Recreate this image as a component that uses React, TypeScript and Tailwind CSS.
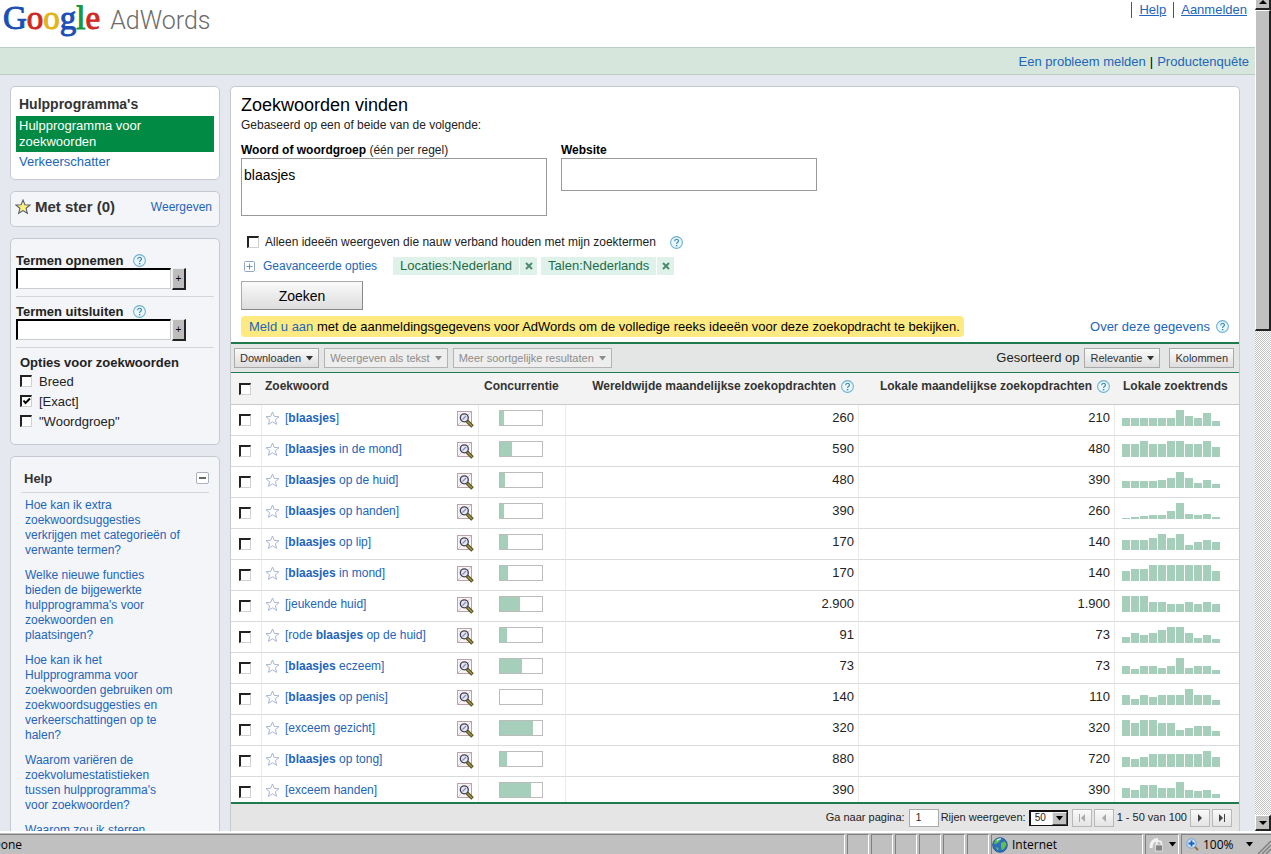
import React from "react";

type Part = { text: string; bold?: boolean };
type Row = { parts: Part[]; fill: number; world: string; local: string; trend: number[] };

const b = (text: string): Part => ({ text, bold: true });
const t = (text: string): Part => ({ text });

const ROWS: Row[] = [
  { parts: [t("["), b("blaasjes"), t("]")], fill: 4, world: "260", local: "210", trend: [8, 8, 8, 8, 8, 8, 16, 10, 8, 13, 5] },
  { parts: [t("["), b("blaasjes"), t(" in de mond]")], fill: 12, world: "590", local: "480", trend: [13, 13, 16, 13, 13, 16, 16, 13, 13, 16, 10] },
  { parts: [t("["), b("blaasjes"), t(" op de huid]")], fill: 5, world: "480", local: "390", trend: [7, 7, 7, 7, 8, 10, 16, 10, 5, 8, 4] },
  { parts: [t("["), b("blaasjes"), t(" op handen]")], fill: 4, world: "390", local: "260", trend: [1, 2, 3, 4, 4, 8, 16, 5, 4, 5, 2] },
  { parts: [t("["), b("blaasjes"), t(" op lip]")], fill: 8, world: "170", local: "140", trend: [10, 10, 10, 12, 16, 12, 16, 5, 8, 10, 8] },
  { parts: [t("["), b("blaasjes"), t(" in mond]")], fill: 8, world: "170", local: "140", trend: [10, 12, 12, 16, 16, 16, 16, 16, 16, 16, 10] },
  { parts: [t("[jeukende huid]")], fill: 20, world: "2.900", local: "1.900", trend: [16, 16, 16, 10, 10, 8, 8, 10, 8, 10, 8] },
  { parts: [t("[rode "), b("blaasjes"), t(" op de huid]")], fill: 7, world: "91", local: "73", trend: [6, 10, 8, 10, 13, 16, 16, 10, 5, 8, 4] },
  { parts: [t("["), b("blaasjes"), t(" eczeem]")], fill: 22, world: "73", local: "73", trend: [8, 5, 8, 8, 6, 8, 16, 6, 8, 8, 4] },
  { parts: [t("["), b("blaasjes"), t(" op penis]")], fill: 0, world: "140", local: "110", trend: [10, 6, 10, 8, 10, 10, 10, 16, 10, 10, 5] },
  { parts: [t("[exceem gezicht]")], fill: 33, world: "320", local: "320", trend: [16, 13, 16, 16, 13, 13, 6, 8, 10, 10, 5] },
  { parts: [t("["), b("blaasjes"), t(" op tong]")], fill: 7, world: "880", local: "720", trend: [10, 8, 10, 13, 13, 13, 13, 13, 13, 16, 10] },
  { parts: [t("[exceem handen]")], fill: 31, world: "390", local: "390", trend: [10, 8, 13, 13, 10, 10, 16, 8, 7, 8, 4] },
];

const HELP_LINKS = [
  "Hoe kan ik extra zoekwoordsuggesties verkrijgen met categorieën of verwante termen?",
  "Welke nieuwe functies bieden de bijgewerkte hulpprogramma's voor zoekwoorden en plaatsingen?",
  "Hoe kan ik het Hulpprogramma voor zoekwoorden gebruiken om zoekwoordsuggesties en verkeerschattingen op te halen?",
  "Waarom variëren de zoekvolumestatistieken tussen hulpprogramma's voor zoekwoorden?",
  "Waarom zou ik sterren",
];

const STAR = "M7.5 1l1.8 4.4 4.7.3-3.6 3 1.2 4.7-4.1-2.6-4.1 2.6 1.2-4.7-3.6-3 4.7-.3z";

function Check({ id, label, checked }: { id?: string; label?: string; checked?: boolean }) {
  return (
    <span className="relative block h-3 w-3 shrink-0">
      <input
        id={id}
        type="checkbox"
        aria-label={label}
        defaultChecked={checked}
        className="peer block h-3 w-3 appearance-none border-t-2 border-r border-b border-l-2 border-t-[#222] border-r-[#d0d0d0] border-b-[#d0d0d0] border-l-[#222] bg-white"
      />
      <svg viewBox="0 0 12 12" className="pointer-events-none absolute inset-0 hidden h-3 w-3 peer-checked:block">
        <path d="M3.5 5.5l2 2.5L10 3.500" fill="none" stroke="#000" strokeWidth="2" />
      </svg>
    </span>
  );
}

function HelpIcon() {
  return (
    <a href="#uitleg" aria-label="Uitleg" className="block h-[13px] w-[13px] shrink-0">
      <svg viewBox="0 0 13 13" className="block h-[13px] w-[13px]">
        <circle cx="6.500" cy="6.500" r="5.900" fill="#e9f6fb" stroke="#6fb0cf" strokeWidth="1.100" />
        <path d="M4.700 5.200c0-2.600 3.700-2.500 3.700-.3 0 1.400-1.800 1.500-1.800 3" fill="none" stroke="#3486ad" strokeWidth="1.200" />
        <rect x="5.900" y="9" width="1.400" height="1.300" fill="#3486ad" />
      </svg>
    </a>
  );
}

function Caret() {
  return (
    <svg viewBox="0 0 7 5" className="h-[5px] w-[7px]">
      <path d="M0 0h7L3.500 4.500z" fill="currentColor" />
    </svg>
  );
}

function ToolButton({ children, muted, caret }: { children: React.ReactNode; muted?: boolean; caret?: boolean }) {
  return (
    <button
      type="button"
      disabled={muted}
      className={
        muted
          ? "flex h-5 items-center gap-[5px] border border-[#b4b4b4] bg-[#eeeeee] px-[5px] text-[11px] whitespace-nowrap text-[#8c8c8c]"
          : "flex h-5 items-center gap-[5px] border border-[#aaa] bg-linear-to-b from-[#fafafa] to-[#dedede] px-[5px] text-[11px] whitespace-nowrap text-[#333]"
      }
    >
      {children}
      {caret && <Caret />}
    </button>
  );
}

function PageButton({ label, path, muted }: { label: string; path: string; muted?: boolean }) {
  return (
    <button
      type="button"
      aria-label={label}
      disabled={muted}
      className="flex h-[18px] w-5 items-center justify-center border border-[#b8b8b8] bg-linear-to-b from-[#fafafa] to-[#e4e4e4] text-[#444] disabled:text-[#aaa]"
    >
      <svg viewBox="0 0 10 8" className="h-2 w-2.5">
        <path d={path} fill="currentColor" />
      </svg>
    </button>
  );
}

function Chip({ children }: { children: string }) {
  return (
    <span className="flex h-[18px] items-center text-[13px] text-[#1f6b45]">
      <span className="flex h-full items-center bg-[#def2ea] px-[7px]">{children}</span>
      <button type="button" aria-label={"Verwijder " + children} className="ml-px flex h-full w-[17px] items-center justify-center bg-[#def2ea]">
        <svg viewBox="0 0 8 8" className="h-2 w-2">
          <path d="M1 1l6 6M7 1L1 7" stroke="#4d8a6c" strokeWidth="2" />
        </svg>
      </button>
    </span>
  );
}

function TermField({ id, label }: { id: string; label: string }) {
  return (
    <div className="border-b border-[#d5d7dd] pt-1.5 pb-1.5">
      <div className="flex h-4 items-center gap-2.5">
        <label htmlFor={id} className="pt-px text-[13px] leading-4 font-bold text-[#222]">{label}</label>
        <HelpIcon />
      </div>
      <div className="flex h-[22px] gap-px">
        <input id={id} type="text" className="h-[21px] w-[155px] border-t-2 border-r border-b border-l-2 border-t-black border-r-[#ccc] border-b-[#ccc] border-l-black bg-white px-1 text-xs outline-none" />
        <button type="button" aria-label={label + " toevoegen"} className="flex h-[22px] w-3.5 items-center justify-center border-t border-r-2 border-b-2 border-l border-t-[#eee] border-r-[#222] border-b-[#222] border-l-[#eee] bg-[#bdbdbd] text-[10px]">
          +
        </button>
      </div>
    </div>
  );
}

function MagnifierIcon() {
  return (
    <svg viewBox="0 0 17 17" className="block h-[17px] w-[17px]">
      <rect x=".5" y=".5" width="14" height="14" fill="#f8f4f5" stroke="#b9a4ac" />
      <path d="M1 14L14 1M2 3l11 11" stroke="#d9c9d0" strokeWidth="1" />
      <path d="M10 10l5.500 5.500" stroke="#4f4a1e" strokeWidth="3.600" />
      <path d="M10.500 10.500l4.500 4.500" stroke="#a89a45" strokeWidth="1.400" />
      <circle cx="7.300" cy="6.800" r="4" fill="#e3e6f5" stroke="#433f50" strokeWidth="1.300" />
      <path d="M5.500 8.500L9 5" stroke="#8b8fb8" strokeWidth="1.300" />
    </svg>
  );
}

function Sidebar() {
  const card = "rounded-[5px] border border-[#c6c9d2]";
  return (
    <aside className="flex w-[210px] shrink-0 flex-col gap-[11px]">
      <nav className={card + " h-[94px] shrink-0 bg-white px-[5px] pt-2"}>
        <h2 className="h-[21px] px-[3px] text-[14px] leading-[18px] font-bold text-[#333]">Hulpprogramma's</h2>
        <a href="#zoekwoorden" className="block h-9 bg-[#018a43] px-[3px] py-0.5 text-[13px] leading-4 text-white">
          Hulpprogramma voor<br />zoekwoorden
        </a>
        <a href="#verkeer" className="block px-[3px] pt-0.5 text-[13px] leading-4 text-[#2265ba]">Verkeerschatter</a>
      </nav>

      <section className={card + " flex h-9 shrink-0 items-center bg-[#f4f5f9] pr-[7px] pb-1 pl-1"}>
        <svg viewBox="0 0 15 15" className="h-4 w-4"><path d={STAR} fill="#fbf07a" stroke="#555c74" /></svg>
        <h2 className="ml-1 flex-1 text-[15px] font-bold text-[#333]">Met ster (0)</h2>
        <a href="#sterren" className="text-[12px] text-[#2265ba]">Weergeven</a>
      </section>

      <section className={card + " shrink-0 bg-[#f4f5f9] px-[5px] pt-[7px] pb-[13px]"}>
        <TermField id="opnemen" label="Termen opnemen" />
        <TermField id="uitsluiten" label="Termen uitsluiten" />
        <fieldset className="pt-[7px] pl-1">
          <legend className="contents text-[13px] font-bold text-[#222]"><span className="block leading-4">Opties voor zoekwoorden</span></legend>
          {["Breed", "[Exact]", '"Woordgroep"'].map((o, i) => (
            <div key={o} className="flex h-5 items-center gap-[7px]">
              <Check id={"optie" + i} checked={i === 1} />
              <label htmlFor={"optie" + i} className="pt-px text-[13px] leading-4 text-[#222]">{o}</label>
            </div>
          ))}
        </fieldset>
      </section>

      <section className={card + " bg-[#f4f5f9] px-2.5 pt-[13px]"}>
        <div className="flex h-[23px] items-start justify-between border-b border-[#d5d7dd] pl-[3px]">
          <h2 className="text-[13px] leading-[18px] font-bold text-[#333]">Help</h2>
          <button type="button" aria-label="Help inklappen" className="mt-0.5 flex h-3 w-[13px] items-center justify-center rounded-[2px] border border-[#aab0bd] bg-white">
            <span className="h-0.5 w-[7px] bg-[#666]" />
          </button>
        </div>
        <ul className="flex w-[161px] flex-col gap-2.5 pt-[5px] pl-1">
          {HELP_LINKS.map((h) => (
            <li key={h} className="text-[12px] leading-[15px]"><a href="#help" className="text-[#2265ba]">{h}</a></li>
          ))}
        </ul>
      </section>
    </aside>
  );
}

function SearchForm() {
  return (
    <form className="px-2.5 pt-1.5 text-[12px] leading-4 text-[#222]">
      <h1 className="text-[18px] leading-6 text-black">Zoekwoorden vinden</h1>
      <p>Gebaseerd op een of beide van de volgende:</p>
      <div className="flex gap-3.5 pt-[9px]">
        <div className="w-[306px]">
          <label htmlFor="woord" className="block"><b className="text-black">Woord of woordgroep</b> (één per regel)</label>
          <textarea id="woord" defaultValue="blaasjes" className="block h-[58px] w-full resize-none border border-[#999] bg-white px-0.5 py-2 text-[14px] leading-4 text-black outline-none" />
        </div>
        <div className="w-64">
          <label htmlFor="website" className="block font-bold text-black">Website</label>
          <input id="website" type="text" className="block h-[33px] w-full border border-[#999] bg-white px-1 text-[14px] outline-none" />
        </div>
      </div>
      <div className="mt-[18px] flex h-4 items-center pl-1.5">
        <Check id="nauw" />
        <label htmlFor="nauw" className="mr-3.5 ml-1.5">Alleen ideeën weergeven die nauw verband houden met mijn zoektermen</label>
        <HelpIcon />
      </div>
      <div className="mt-[7px] flex h-[18px] items-center">
        <button type="button" className="mr-4 ml-[3px] flex items-center gap-2 text-[#2265ba]">
          <svg viewBox="0 0 11 11" className="h-[11px] w-[11px]">
            <rect x=".5" y=".5" width="10" height="10" rx="1" fill="#fff" stroke="#8fa6c4" />
            <path d="M2.500 5.500h6M5.500 2.500v6" stroke="#7592b8" />
          </svg>
          Geavanceerde opties
        </button>
        <div className="flex gap-1">
          <Chip>Locaties:Nederland</Chip>
          <Chip>Talen:Nederlands</Chip>
        </div>
      </div>
      <button type="submit" className="mt-1.5 block h-[29px] w-[122px] border border-[#aaa] border-r-[#888] border-b-[#888] bg-linear-to-b from-[#fafafa] to-[#dddddd] text-[14px] text-black">
        Zoeken
      </button>
      <div className="flex items-center justify-between pt-1.5 pb-[5px]">
        <p className="rounded-[4px] bg-[#feea81] pr-1 pl-2 text-[13px] leading-[21px] text-black">
          <a href="#aanmelden" className="text-[#2265ba]">Meld u aan</a> met de aanmeldingsgegevens voor AdWords om de volledige reeks ideeën voor deze zoekopdracht te bekijken.
        </p>
        <span className="flex items-center gap-1.5 text-[13px]">
          <a href="#gegevens" className="text-[#2265ba]">Over deze gegevens</a>
          <HelpIcon />
        </span>
      </div>
    </form>
  );
}

function Results() {
  const cell = "border-r border-b border-r-[#ebebeb] border-b-[#d9dadd] p-0 align-top";
  const head = "border-b border-[#c9c9c9] p-0 pt-[5px] align-top text-[12px] leading-4 font-bold text-[#333]";
  return (
    <table className="w-full table-fixed border-separate border-spacing-0">
      <colgroup>
        <col className="w-[31px]" />
        <col className="w-[217px]" />
        <col className="w-[87px]" />
        <col />
        <col className="w-[256px]" />
        <col className="w-[124px]" />
      </colgroup>
      <thead>
        <tr className="h-8 bg-[#f3f3f3]">
          <th className={head}><div className="pt-[5px] pl-2"><Check label="Alles selecteren" /></div></th>
          <th className={head + " text-left"}><span className="pl-[3px]">Zoekwoord</span></th>
          <th className={head + " text-left"}><span className="pl-[5px]">Concurrentie</span></th>
          <th className={head}><div className="flex items-center justify-end gap-[5px] pr-[5px]">Wereldwijde maandelijkse zoekopdrachten <HelpIcon /></div></th>
          <th className={head}><div className="flex items-center justify-end gap-[5px] pr-[5px]">Lokale maandelijkse zoekopdrachten <HelpIcon /></div></th>
          <th className={head + " text-left"}><span className="pl-2">Lokale zoektrends</span></th>
        </tr>
      </thead>
      <tbody>
        {ROWS.map((r) => {
          const name = r.parts.map((p) => p.text).join("");
          return (
            <tr key={name} className="h-[31px]">
              <td className={cell}><div className="pt-[9px] pl-2"><Check label={name} /></div></td>
              <td className={cell}>
                <div className="flex h-[30px] items-center pr-1 pl-[3px]">
                  <button type="button" aria-label="Ster" className="mb-1 h-[15px] w-[15px]">
                    <svg viewBox="0 0 15 15" className="h-[15px] w-[15px]"><path d={STAR} fill="#fff" stroke="#a9b6d6" /></svg>
                  </button>
                  <a href="#zoekwoord" className="mb-1 ml-[5px] flex-1 text-[12px] leading-4 whitespace-pre text-[#2265ba]">
                    {r.parts.map((p) => (p.bold ? <b key={p.text}>{p.text}</b> : p.text))}
                  </a>
                  <button type="button" aria-label="Zoeken op Google" className="mb-0.5"><MagnifierIcon /></button>
                </div>
              </td>
              <td className={cell}>
                <div className="mt-[5px] ml-5 h-4 w-11 border border-[#bcbcbc]">
                  <div className="h-full bg-[#a5cfbb]" style={{ width: r.fill }} />
                </div>
              </td>
              <td className={cell + " text-right"}><div className="pt-[5px] pr-1 text-[13px] leading-4 text-[#222]">{r.world}</div></td>
              <td className={cell + " text-right"}><div className="pt-[5px] pr-1 text-[13px] leading-4 text-[#222]">{r.local}</div></td>
              <td className="border-b border-[#d9dadd] p-0 align-top">
                <div className="flex h-[21px] items-end gap-px pl-[7px]">
                  {r.trend.map((h, i) => (
                    <span key={i} className="w-2 bg-[#a5cfbb]" style={{ height: h }} />
                  ))}
                </div>
              </td>
            </tr>
          );
        })}
      </tbody>
    </table>
  );
}

function Pager() {
  return (
    <footer className="flex h-[29px] shrink-0 items-center justify-end border-t-2 border-[#1f7a4d] bg-[#e5e5e5] pr-[7px] text-[11px] text-[#222]">
      <label htmlFor="pagina">Ga naar pagina:</label>
      <input id="pagina" type="text" defaultValue="1" className="mr-0.5 ml-1 h-[18px] w-[30px] border border-[#aaa] bg-white px-1.5 text-[10px] outline-none" />
      <label htmlFor="rijen">Rijen weergeven:</label>
      <span className="relative mr-1 ml-[3px] block h-4 w-[39px]">
        <select id="rijen" defaultValue="50" className="block h-4 w-full appearance-none border-t-2 border-r border-b border-l-2 border-[#111] bg-white pl-1 text-[10px] leading-3">
          <option>50</option>
          <option>100</option>
        </select>
        <span className="pointer-events-none absolute top-0.5 right-px flex h-[13px] w-[15px] items-center justify-center border border-[#eee] border-r-[#444] border-b-[#444] bg-[#c0c0c0] text-black"><Caret /></span>
      </span>
      <span className="flex items-center gap-0.5">
        <PageButton label="Eerste pagina" muted path="M2 0h1v8H2zM8 0v8L4 4z" />
        <PageButton label="Vorige pagina" muted path="M7 0v8L3 4z" />
      </span>
      <span className="mx-[3px]">1 - 50 van 100</span>
      <span className="flex items-center gap-0.5">
        <PageButton label="Volgende pagina" path="M3 0v8l4-4z" />
        <PageButton label="Laatste pagina" path="M2 0v8l4-4zM7 0h1v8H7z" />
      </span>
    </footer>
  );
}

function ScrollArrow({ up }: { up?: boolean }) {
  return (
    <span className="flex h-4 w-full shrink-0 items-center justify-center border-t border-r-2 border-b-2 border-l border-t-white border-r-[#222] border-b-[#222] border-l-white bg-[#c0c0c0]">
      <svg viewBox="0 0 8 4" className="h-1 w-2"><path d={up ? "M0 4h8L4 0z" : "M0 0h8L4 4z"} fill="#000" /></svg>
    </span>
  );
}

function StatusBar() {
  const pane = "flex h-full items-center border-t border-l border-t-[#808080] border-l-[#808080] border-r border-r-white";
  return (
    <div className="flex h-[23px] shrink-0 gap-0.5 overflow-hidden border-t-2 border-t-white bg-[#c0c0c0] pt-px font-['Open_Sans',sans-serif] text-[12px] leading-4 text-black">
      <div className="-ml-2 flex h-full min-w-0 flex-1 items-center border-t border-r border-t-[#808080] border-r-white">Done</div>
      {[0, 1, 2, 3, 4, 5].map((i) => (
        <div key={i} className={pane + " w-[22px]"} />
      ))}
      <div className={pane + " w-[152px] gap-1"}>
        <svg viewBox="0 0 16 16" className="h-4 w-4">
          <circle cx="8" cy="8" r="7.300" fill="#2c6fbd" stroke="#1e4c86" strokeWidth=".8" />
          <path d="M3 3.500c2-2 4-1.800 5.500-1.500L7 5 4.500 6.500 2 7zM9 6l4-1.500 1.500 3L12 12l-2.500 1L9 10zM3.500 10l3 1-.5 3z" fill="#5fc04f" />
          <path d="M5 3.500a4 3 0 0 1 4-1.500" fill="none" stroke="#d9eeff" strokeWidth="1.300" />
        </svg>
        Internet
      </div>
      <div className={pane + " w-[34px] justify-center gap-1"}>
        <svg viewBox="0 0 16 16" className="h-4 w-4">
          <path d="M2 11c0-6 3-8.500 7-8.500" fill="none" stroke="#f4f4f4" strokeWidth="3" />
          <path d="M7.500 8V6.500c0-3.300 5-3.300 5 0V8" fill="none" stroke="#f4f4f4" strokeWidth="1.600" />
          <rect x="6.500" y="8" width="7" height="6" fill="#858585" stroke="#eee" strokeWidth=".7" />
        </svg>
        <Caret />
      </div>
      <div className={pane + " w-[90px] gap-1 border-r-0 pl-1"}>
        <svg viewBox="0 0 13 13" className="h-[13px] w-[13px]">
          <path d="M8 8l4 4" stroke="#9a6a3a" strokeWidth="2" />
          <circle cx="5.500" cy="5.500" r="4.700" fill="#cfe6fb" stroke="#6f9fd2" />
          <path d="M5.500 2.500v6M2.500 5.500h6" stroke="#1a5fc0" strokeWidth="1.800" />
        </svg>
        <span className="flex-1">100%</span>
        <Caret />
        <svg viewBox="0 0 14 14" className="h-3.5 w-3.5 self-end"><path d="M1 14L14 1M5 14l9-9M9 14l5-5" stroke="#808080" strokeWidth="1.500" /></svg>
      </div>
    </div>
  );
}

export default function App() {
  return (
    <div className="flex h-screen flex-col overflow-hidden bg-white font-['Liberation_Sans',Arial,sans-serif]">
      <div className="flex min-h-0 flex-1">
        <div className="flex min-w-0 flex-1 flex-col">
          <header className="flex h-[47px] shrink-0 items-start justify-between pr-2 pl-[3px]">
            <div className="flex items-baseline gap-2.5 leading-9">
              <span className="font-['Liberation_Serif',serif] text-[33px] [-webkit-text-stroke:1px_currentColor]">
                <span className="text-[#1a4fb5]">G</span>
                <span className="text-[#cf2a22]">o</span>
                <span className="text-[#e3b414]">o</span>
                <span className="text-[#1a4fb5]">g</span>
                <span className="text-[#149a3c]">l</span>
                <span className="text-[#cf2a22]">e</span>
              </span>
              <span className="font-[Roboto,sans-serif] text-[25px] font-light text-[#6c6c6c]">AdWords</span>
            </div>
            <nav className="flex pt-0.5 text-[13px] leading-4 text-[#2265ba] underline">
              <a href="#help" className="border-l border-[#555] px-[7px]">Help</a>
              <a href="#aanmelden" className="border-l border-[#555] pl-[7px]">Aanmelden</a>
            </nav>
          </header>
          <div className="flex h-7 shrink-0 items-center justify-end gap-1 border-y border-[#b9cdc2] bg-[#d6e6dc] pt-0.5 pr-1.5 text-[13px]">
            <a href="#probleem" className="text-[#2265ba]">Een probleem melden</a>
            <span>|</span>
            <a href="#enquete" className="text-[#2265ba]">Productenquête</a>
          </div>
          <div className="flex min-h-0 flex-1 gap-2.5 overflow-hidden bg-[#e6e8f0] pt-[11px] pr-[15px] pl-2.5">
            <Sidebar />
            <main className="flex min-w-0 flex-1 flex-col overflow-hidden rounded-t-[5px] border-x border-t border-[#c6c9d2] bg-white">
              <SearchForm />
              <div className="flex h-[31px] shrink-0 items-center gap-[5px] border-t-2 border-b border-[#1f7a4d] bg-[#e3e6e4] pr-[5px] pl-[3px]">
                <ToolButton caret>Downloaden</ToolButton>
                <ToolButton caret muted>Weergeven als tekst</ToolButton>
                <ToolButton caret muted>Meer soortgelijke resultaten</ToolButton>
                <span className="ml-auto text-[13px] text-[#222]">Gesorteerd op</span>
                <ToolButton caret>Relevantie</ToolButton>
                <span className="ml-1"><ToolButton>Kolommen</ToolButton></span>
              </div>
              <div className="min-h-0 flex-1 overflow-hidden"><Results /></div>
              <Pager />
            </main>
          </div>
        </div>
        <div className="flex w-4 shrink-0 flex-col bg-[repeating-conic-gradient(#c4c4c4_0_25%,#ffffff_0_50%)] bg-[length:2px_2px]">
          <span className="-mt-1.5 block"><ScrollArrow up /></span>
          <span className="block h-[321px] border-t border-r-2 border-b-2 border-l border-t-white border-r-[#222] border-b-[#222] border-l-white bg-[#c0c0c0]" />
          <span className="mt-auto block"><ScrollArrow /></span>
        </div>
      </div>
      <StatusBar />
    </div>
  );
}
